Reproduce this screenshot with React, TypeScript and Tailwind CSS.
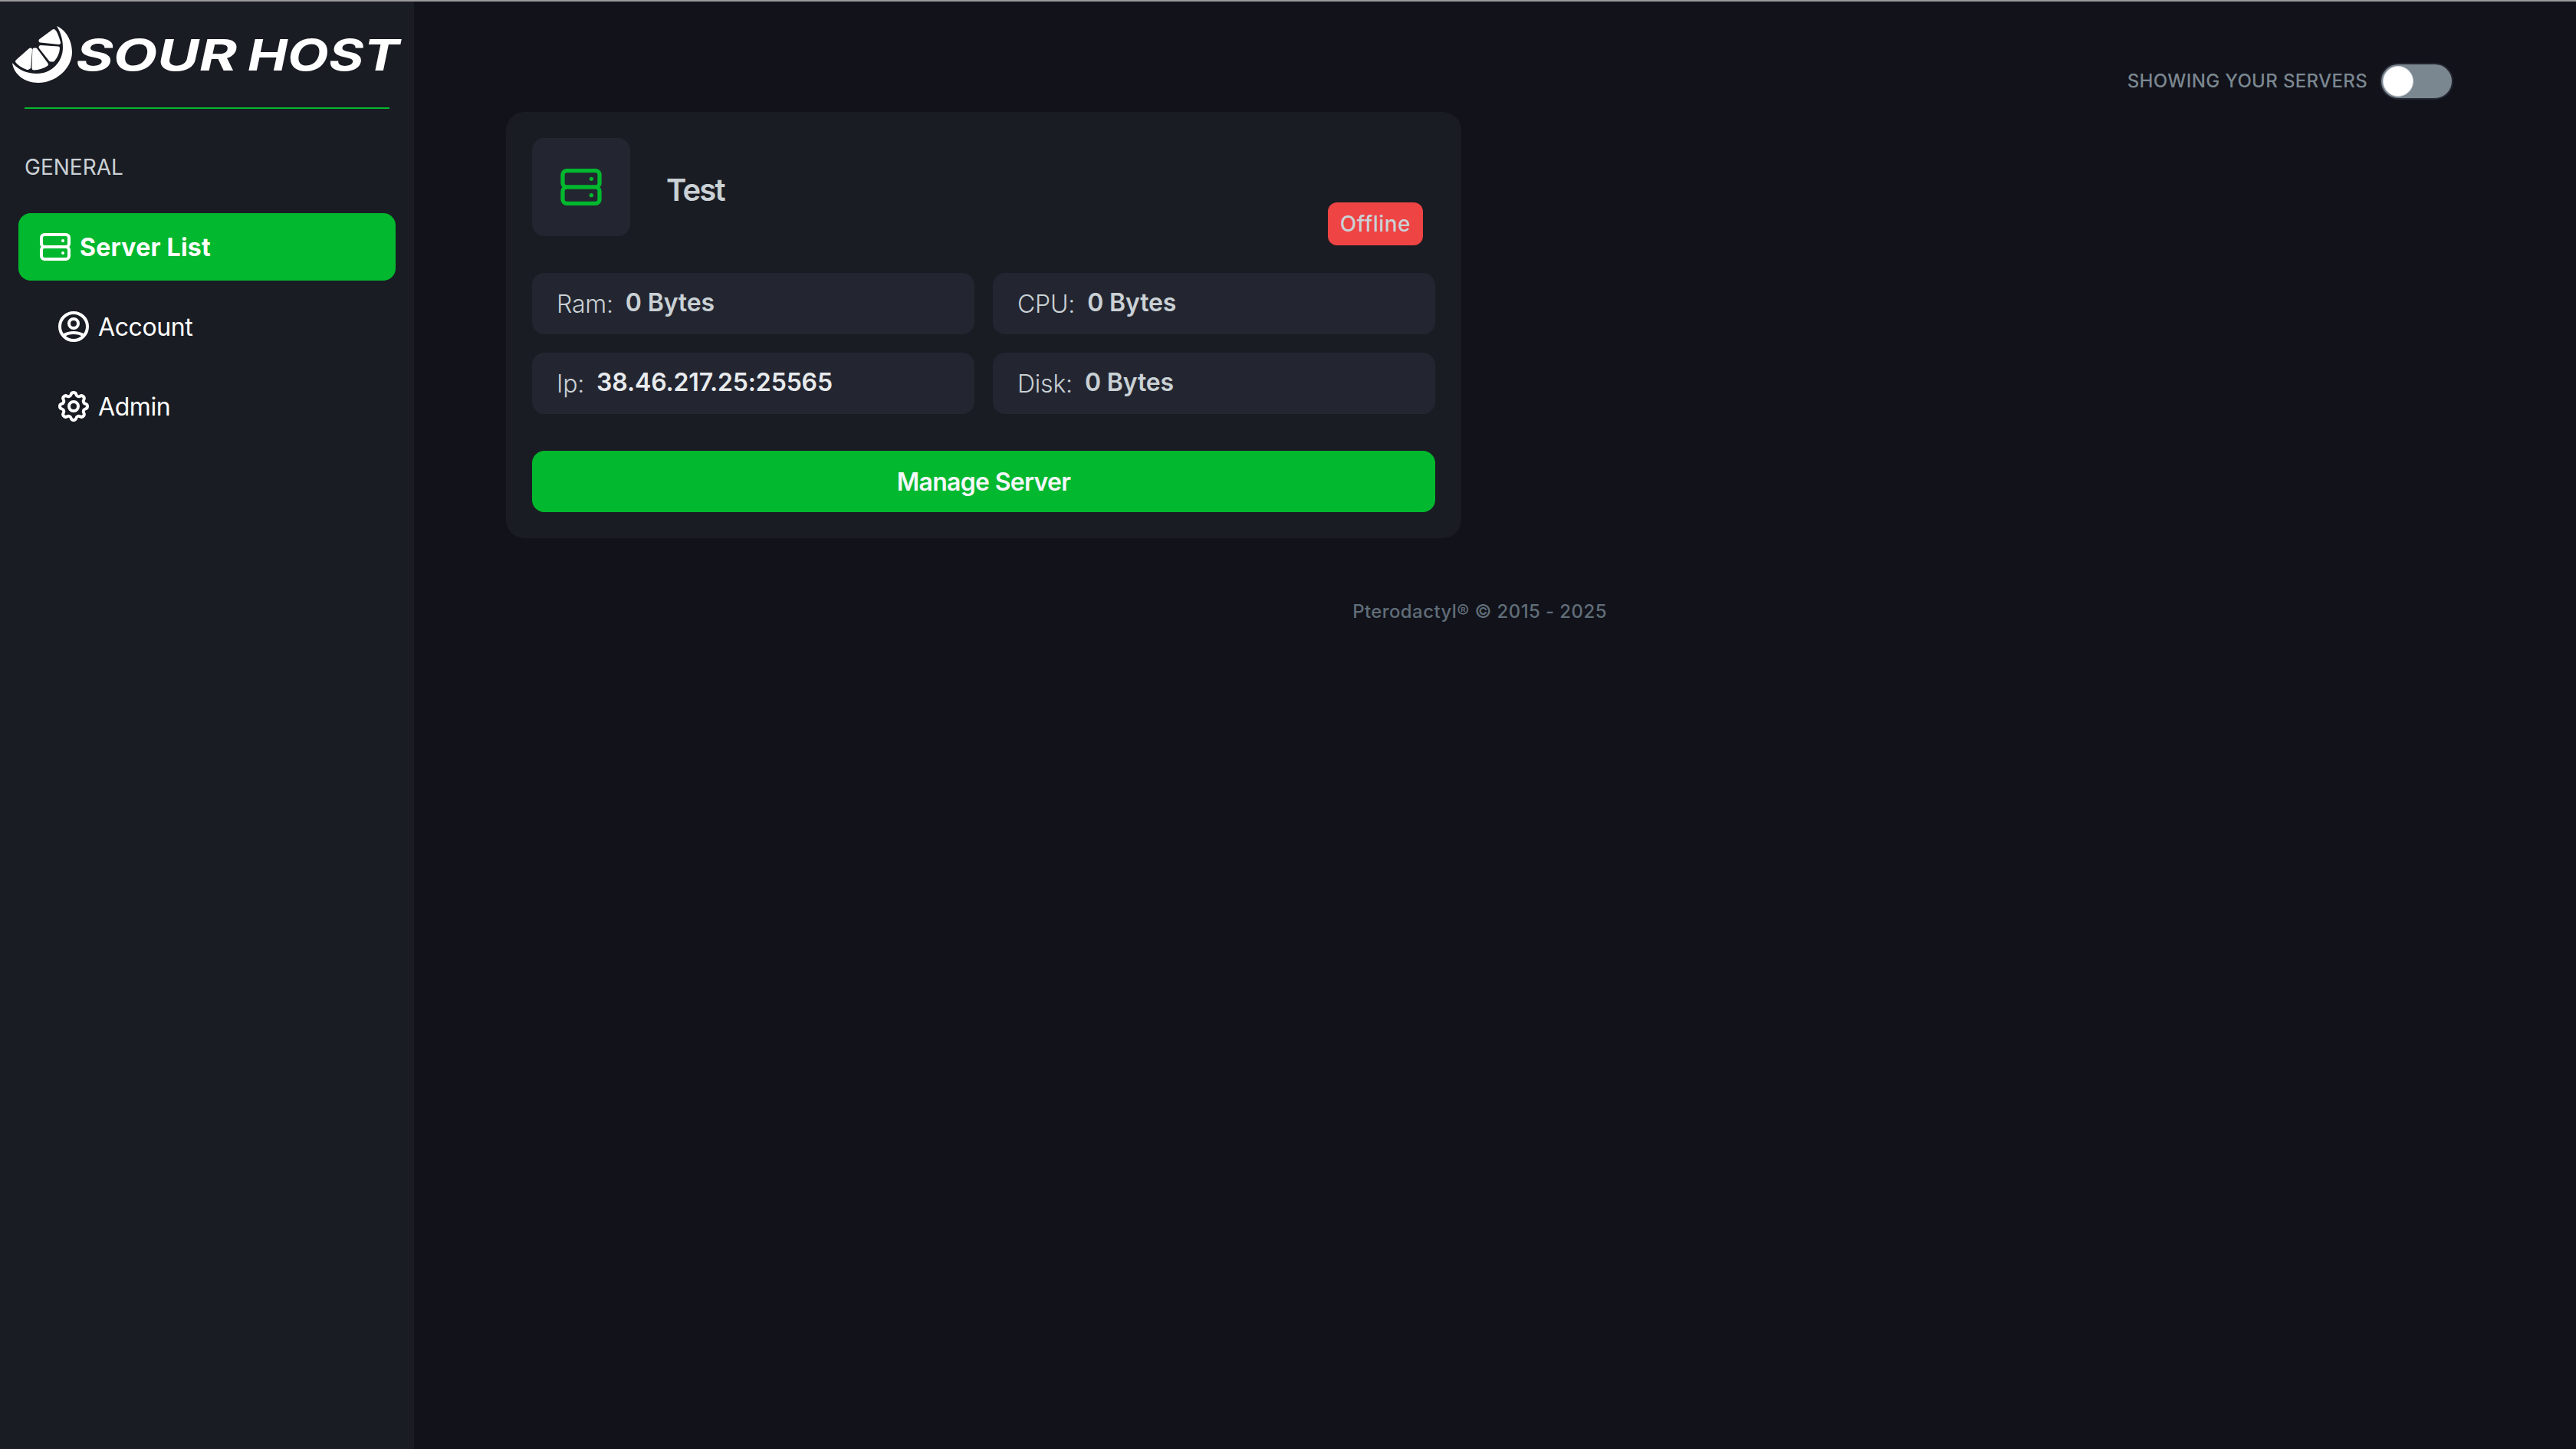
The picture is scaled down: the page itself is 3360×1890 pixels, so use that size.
import clsx from "clsx";
import type { ReactNode } from "react";
import type { IconType } from "react-icons";
import { HiOutlineCog, HiOutlineServer, HiOutlineUserCircle } from "react-icons/hi";

interface NavItem {
  label: string;
  icon: IconType;
  active?: boolean;
}

interface StatProps {
  label: string;
  children: ReactNode;
  className?: string;
}

const navItems: NavItem[] = [
  { label: "Server List", icon: HiOutlineServer, active: true },
  { label: "Account", icon: HiOutlineUserCircle },
  { label: "Admin", icon: HiOutlineCog },
];

function Logo() {
  return (
    <svg viewBox="0 2 540 138" className="h-[138px] w-[540px] shrink-0" fill="#fff">
      {/* peel */}
      <path d="M74 34C86 39 94 53 94 68C94 90 72 108 50 108C32 108 18 97 16 82C24 91 35 96 48 96C68 96 82 80 82 62C82 51 79 42 74 34Z" />
      {/* segments */}
      <g stroke="#fff" strokeWidth="5" strokeLinejoin="round">
        <path d="M53 53L70 40.5Q73 43 76.500 55.500Z" />
        <path d="M53 61.500L75.500 63Q75 71 69 78L66 78Z" />
        <path d="M44.800 65L46.500 65L60.500 84Q54 88.500 44 89Z" />
        <path d="M39.500 65L22.500 80Q28 86 36 88.500L37.800 87.500Z" />
      </g>
      <g fontSize="56" fontWeight="700" fontStyle="italic">
        <text x="99" y="91.500" textLength="210" lengthAdjust="spacingAndGlyphs">
          SOUR
        </text>
        <text x="323" y="91.500" textLength="198" lengthAdjust="spacingAndGlyphs">
          HOST
        </text>
      </g>
    </svg>
  );
}

function Sidebar() {
  return (
    <aside className="flex w-[540px] shrink-0 flex-col bg-[#1a1c23]">
      <Logo />
      <div className="mx-8 h-0.5 bg-[#02b82e]" />
      <p className="mt-14 ml-8 text-[28px] leading-10">GENERAL</p>
      <nav className="mt-10 flex flex-col gap-4 px-6">
        {navItems.map(({ label, icon: Icon, active }) => (
          <a
            key={label}
            className={clsx(
              "flex h-[88px] items-center gap-2 rounded-2xl text-[32px] text-white",
              active ? "bg-[#02b82e] pl-6 font-bold tracking-[0.25px]" : "pl-12 tracking-[-0.4px]",
            )}
          >
            <Icon className="size-12" />
            <span className="pt-0.5">{label}</span>
          </a>
        ))}
      </nav>
    </aside>
  );
}

function Stat({ label, children, className }: StatProps) {
  return (
    <div className="flex h-20 items-center gap-4 rounded-2xl bg-[#232631] px-8 text-[32px]">
      <span className="pt-0.5 font-light tracking-[-0.2px]">{label}</span>
      <span className={clsx("pb-0.5 font-semibold tracking-[-0.15px]", className)}>{children}</span>
    </div>
  );
}

function ServerCard() {
  return (
    <div className="flex w-[1246px] flex-col rounded-3xl bg-[#1a1c23] p-[34px]">
      <div className="flex h-32">
        <div className="flex size-32 items-center justify-center rounded-2xl bg-[#232631]">
          <HiOutlineServer className="size-16 text-[#02b82e]" />
        </div>
        <p className="ml-[47px] pt-[38px] text-[40px] leading-[60px] font-semibold tracking-[-1.8px]">
          Test
        </p>
        <span className="mt-[84px] mr-4 ml-auto flex h-14 items-center rounded-xl bg-[#ef4444] px-4 text-[28px] font-medium tracking-[0.45px]">
          Offline
        </span>
      </div>
      <div className="mt-12 grid grid-cols-2 gap-6">
        <Stat label="Ram:">0 Bytes</Stat>
        <Stat label="CPU:">0 Bytes</Stat>
        <Stat label="Ip:" className="text-[#e8ebed]">
          38.46.217.25:25565
        </Stat>
        <Stat label="Disk:">0 Bytes</Stat>
      </div>
      <button className="mt-12 h-20 rounded-2xl bg-[#02b82e] pt-0.5 text-[32px] font-semibold tracking-[-0.7px] text-[#f5f7fa]">
        Manage Server
      </button>
    </div>
  );
}

export default function App() {
  return (
    <div className="flex h-[1890px] w-[3360px] overflow-hidden border-t-2 border-[#9a9a9c] bg-[#11121a] font-['Inter','Liberation_Sans',sans-serif] text-[#cad1d5]">
      <Sidebar />
      <main className="flex flex-1 flex-col pt-20 pr-40 pl-[120px]">
        <div className="flex h-12 items-center justify-end gap-4">
          <p className="text-2xl font-medium tracking-[0.35px] text-[#7b8790]">
            SHOWING YOUR SERVERS
          </p>
          <div className="flex h-12 w-24 items-center rounded-full border-2 border-[#232631] bg-[#7b8790] pl-0.5">
            <div className="size-10 rounded-full border border-[#d5d8dc] bg-white" />
          </div>
        </div>
        <div className="mt-4">
          <ServerCard />
        </div>
        <p className="mt-20 text-center text-2xl font-medium tracking-[0.4px] text-[#606d78]">
          Pterodactyl&reg; &copy; 2015 - 2025
        </p>
      </main>
    </div>
  );
}
